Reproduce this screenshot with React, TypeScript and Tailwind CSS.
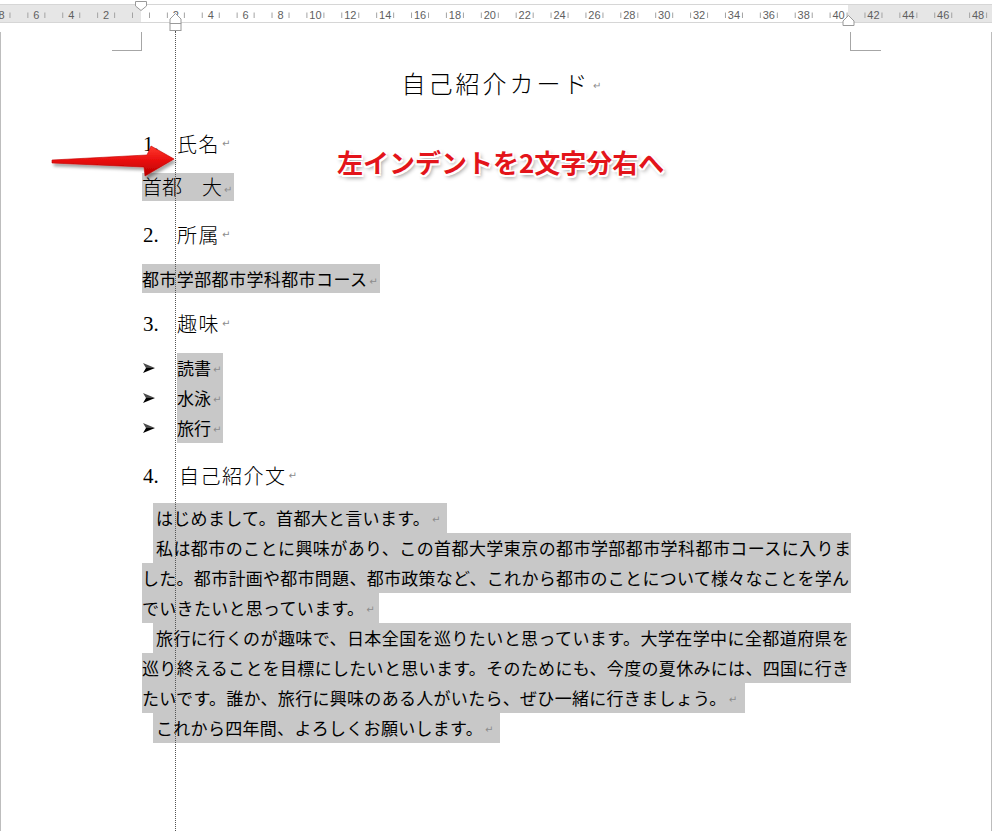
import React from 'react';

const UNIT = 17.44;
const ORIGIN = 141;

function Ruler() {
  const marks: number[] = [];
  for (let n = -8; n <= 48; n += 2) marks.push(n);

  return (
    <svg width={992} height={31} className="block">
      <rect x={0} y={0} width={992} height={31} fill="#ffffff" />
      <rect x={0} y={4} width={141} height={19} fill="#e6e6e6" />
      <rect x={848} y={4} width={144} height={19} fill="#e6e6e6" />
      <line x1={0} y1={4.5} x2={992} y2={4.5} stroke="#d6d6d6" />
      <line x1={0} y1={22.5} x2={992} y2={22.5} stroke="#d6d6d6" />
      {marks.map((n) => {
        const x = ORIGIN + n * UNIT;
        return (
          <g key={n}>
            <line x1={x - 8.5} y1={12.5} x2={x - 8.5} y2={18} stroke="#a3a3a3" />
            <line x1={x + 8.5} y1={12.5} x2={x + 8.5} y2={18} stroke="#a3a3a3" />
            {n !== 0 && (
              <text
                x={x}
                y={19}
                textAnchor="middle"
                fontSize={11}
                fontFamily="'Liberation Sans', Arial, sans-serif"
                fill="#5f5f5f"
              >
                {Math.abs(n)}
              </text>
            )}
          </g>
        );
      })}
      {/* first-line indent */}
      <path d="M135.5 1.5 H146.5 V6 L141 10.5 L135.5 6 Z" fill="#ffffff" stroke="#9a9a9a" />
      {/* hanging indent */}
      <path d="M175.5 13.5 L181 19 V23.5 H170 V19 Z" fill="#ffffff" stroke="#9a9a9a" />
      <rect x={170} y={23.5} width={11} height={7} fill="#ffffff" stroke="#9a9a9a" />
      {/* right indent */}
      <path d="M848.5 15.5 L854 21 V25.5 H843 V21 Z" fill="#ffffff" stroke="#9a9a9a" />
    </svg>
  );
}

function Ret() {
  return (
    <span className="ml-[2px] text-[10px] text-[#8c8c8c] font-['DejaVu_Sans',sans-serif] align-middle">
      ↵
    </span>
  );
}

function Heading({ num, text, shift }: { num: string; text: string; shift?: boolean }) {
  return (
    <div className="flex items-center h-[30px] leading-[30px]">
      <span className="w-[35px] pl-[1px] text-[21px] font-['Liberation_Serif',serif]">{num}</span>
      <span className={`text-[20px] font-light tracking-[1.5px] ${shift ? 'ml-[2px]' : ''}`}>{text}</span>
      <Ret />
    </div>
  );
}

function Bullet() {
  return (
    <svg width={12} height={10} viewBox="0 0 12 10" className="ml-[1px]">
      <polygon points="0,0 12,5 3,5" fill="#4a4a4a" />
      <polygon points="3,5 12,5 0,10" fill="#000000" />
    </svg>
  );
}

function Arrow() {
  return (
    <svg width={140} height={44} viewBox="0 0 140 44" className="absolute left-[46px] top-[140px]">
      <defs>
        <linearGradient id="arrowFill" x1="0" y1="0" x2="0" y2="1">
          <stop offset="0" stopColor="#ff3a2e" />
          <stop offset="0.5" stopColor="#e80d0d" />
          <stop offset="1" stopColor="#b50000" />
        </linearGradient>
        <filter id="arrowShadow" x="-10%" y="-30%" width="130%" height="180%">
          <feDropShadow dx="2" dy="3" stdDeviation="1.6" floodColor="#000" floodOpacity="0.35" />
        </filter>
      </defs>
      <polygon
        points="6,20 101,15 105,6 128,19 99,36 98,27 6,23"
        fill="url(#arrowFill)"
        stroke="#c40000"
        strokeWidth={0.6}
        strokeLinejoin="round"
        filter="url(#arrowShadow)"
      />
    </svg>
  );
}

const hl = 'bg-[#c8c8c8]';

export default function App() {
  return (
    <div className="relative w-[992px] h-[831px] overflow-hidden bg-white text-black font-['Noto_Sans_CJK_JP','Noto_Sans',sans-serif]">
      <Ruler />

      <div className="h-[800px] border-l border-r border-[#bdbdbd]">
        {/* margin corner marks */}
        <div className="flex mt-[1px]">
          <div className="ml-[111px] w-[30px] h-[19px] border-r border-b border-[#a6a6a6]" />
          <div className="w-[708px]" />
          <div className="w-[31px] h-[19px] border-l border-b border-[#a6a6a6]" />
        </div>

        <div className="pl-[141px] w-[850px]">
          <div className="mt-[16px] h-[32px] leading-[32px] text-center text-[24px] font-light tracking-[3px] pl-[12px]">
            自己紹介カード
            <Ret />
          </div>

          <div className="mt-[30px]">
            <Heading num="1." text="氏名" />
          </div>
          <div className={`mt-[14px] w-[92px] h-[28px] leading-[28px] text-[20px] font-light ${hl}`}>
            首都　大
            <Ret />
          </div>

          <div className="mt-[19px]">
            <Heading num="2." text="所属" />
          </div>
          <div className={`mt-[14px] w-[238px] h-[29px] leading-[29px] text-[17px] tracking-[0.4px] ${hl}`}>
            都市学部都市学科都市コース
            <Ret />
          </div>

          <div className="mt-[16px]">
            <Heading num="3." text="趣味" />
          </div>
          <div className="mt-[14px] flex flex-col">
            {['読書', '水泳', '旅行'].map((t) => (
              <div key={t} className="flex items-center h-[30px]">
                <div className="w-[35px] flex items-center">
                  <Bullet />
                </div>
                <div className={`w-[46px] h-[30px] leading-[30px] text-[17px] ${hl}`}>
                  {t}
                  <Ret />
                </div>
              </div>
            ))}
          </div>

          <div className="mt-[18px]">
            <Heading num="4." text="自己紹介文" shift />
          </div>

          <div className="mt-[12px] flex flex-col items-start text-[17px] leading-[30px]">
            <div className={`ml-[11px] pl-[3px] pr-[6px] h-[30px] tracking-[0.3px] ${hl}`}>
              はじめまして。首都大と言います。
              <Ret />
            </div>
            <div className={`ml-[11px] pl-[3px] w-[698px] h-[30px] text-justify [text-align-last:justify] ${hl}`}>
              私は都市のことに興味があり、この首都大学東京の都市学部都市学科都市コースに入りま
            </div>
            <div className={`w-[709px] pr-[2px] h-[30px] text-justify [text-align-last:justify] ${hl}`}>
              した。都市計画や都市問題、都市政策など、これから都市のことについて様々なことを学ん
            </div>
            <div className={`pr-[4px] h-[30px] tracking-[0.3px] ${hl}`}>
              でいきたいと思っています。
              <Ret />
            </div>
            <div className={`ml-[11px] pl-[3px] w-[698px] pr-[2px] h-[30px] text-justify [text-align-last:justify] ${hl}`}>
              旅行に行くのが趣味で、日本全国を巡りたいと思っています。大学在学中に全都道府県を
            </div>
            <div className={`w-[709px] pr-[2px] h-[30px] text-justify [text-align-last:justify] ${hl}`}>
              巡り終えることを目標にしたいと思います。そのためにも、今度の夏休みには、四国に行き
            </div>
            <div className={`pr-[8px] h-[30px] tracking-[0.3px] ${hl}`}>
              たいです。誰か、旅行に興味のある人がいたら、ぜひ一緒に行きましょう。
              <Ret />
            </div>
            <div className={`ml-[11px] pl-[3px] pr-[6px] h-[30px] tracking-[0.3px] ${hl}`}>
              これから四年間、よろしくお願いします。
              <Ret />
            </div>
          </div>
        </div>
      </div>

      {/* indent guide while dragging */}
      <div className="absolute left-[175px] top-[31px] bottom-0 w-0 border-l border-dotted border-[#555555]" />

      <Arrow />

      <div className="absolute left-[337px] top-[145px] h-[34px] leading-[34px] text-[26px] font-bold text-[#e3141a] whitespace-nowrap [text-shadow:1.5px_1.5px_0_#fff,-1.5px_-1.5px_0_#fff,1.5px_-1.5px_0_#fff,-1.5px_1.5px_0_#fff,0_2px_0_#fff,2px_3px_4px_rgba(0,0,0,0.45)]">
        左インデントを2文字分右へ
      </div>
    </div>
  );
}
